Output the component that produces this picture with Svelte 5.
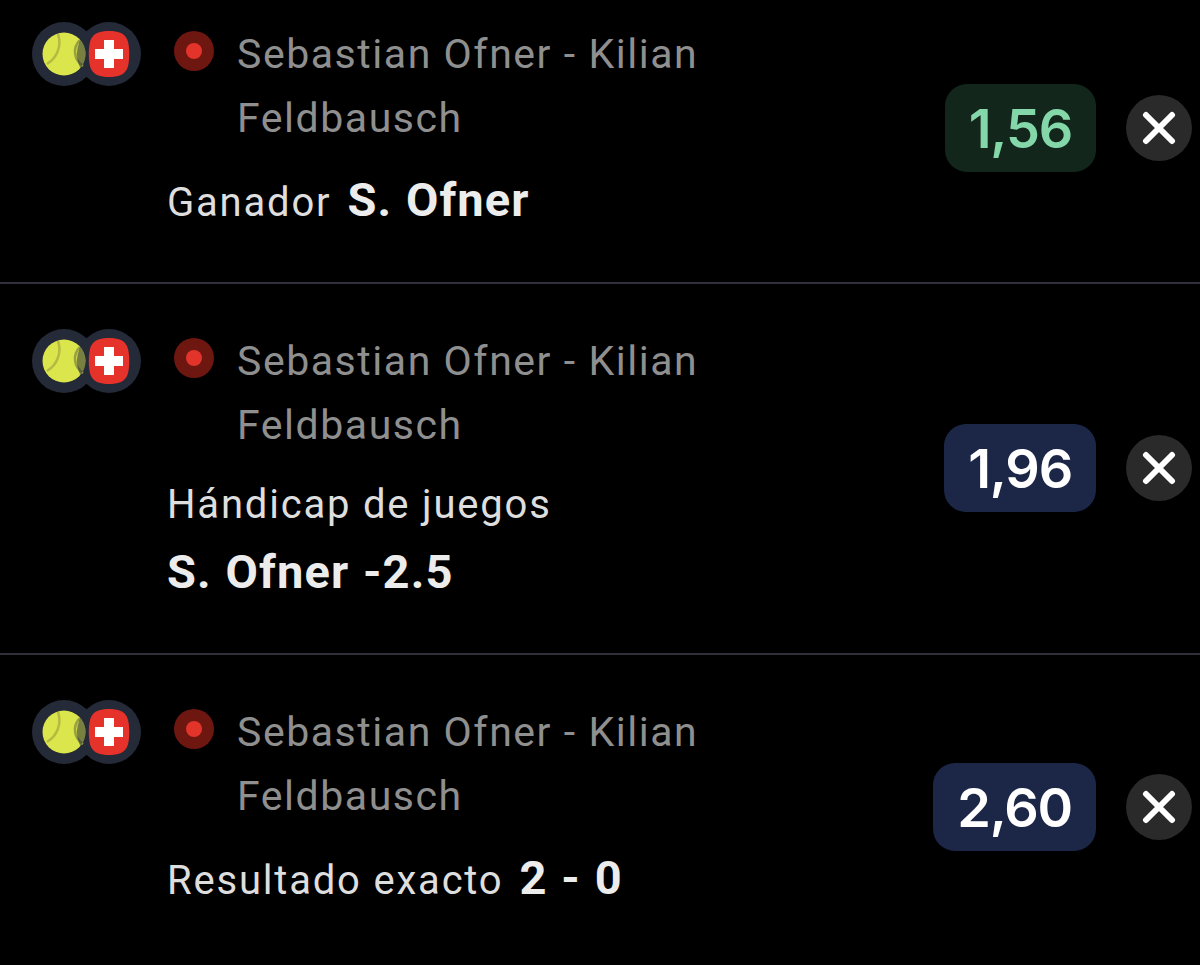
<script>
    const bets = [
        {market: 'Ganador', pick: 'S. Ofner', odds: '1,56', kind: 'won', inline: true},
        {market: 'Hándicap de juegos', pick: 'S. Ofner -2.5', odds: '1,96', kind: 'open', inline: false},
        {market: 'Resultado exacto', pick: '2 - 0', odds: '2,60', kind: 'open', inline: true}
    ]
</script>

<div class="list">
    {#each bets as bet}
        <div class="bet">
            <div class="info">
                <div class="head">
                    <div class="icons">
                        <div class="disc ball">
                            <svg width="44" height="44" viewBox="0 0 44 44">
                                <circle cx="22" cy="22" r="21.5" fill="#dbe64c"/>
                                <path d="M5 32C15 26 20 14 16 2" fill="none" stroke="#b4bb40" stroke-width="2.5"/>
                                <path d="M41 34C32 28 30 16 38 8" fill="none" stroke="#9aa040" stroke-width="2.5"/>
                                <path d="M38.26 7.93A21.5 21.5 0 0 1 38.26 36.07A32 32 0 0 1 38.26 7.93z" fill="rgba(37, 42, 56, .55)"/>
                            </svg>
                        </div>
                        <div class="disc flag">
                            <svg width="42" height="46" viewBox="0 0 42 46">
                                <path d="M21 0C30 0 36 2 39 8C42 14 42 32 39 38C36 44 30 46 21 46C12 46 6 44 3 38C0 32 0 14 3 8C6 2 12 0 21 0z" fill="#e5322b"/>
                                <path d="M16 9h10v9h9v10h-9v9h-10v-9h-9v-10h9z" fill="#fff"/>
                            </svg>
                        </div>
                    </div>
                    <div class="live"><span></span></div>
                    <div class="title">Sebastian Ofner - Kilian Feldbausch</div>
                </div>
                <div class="market" class:stack={!bet.inline}>
                    <span class="label">{bet.market}</span>
                    <span class="pick">{bet.pick}</span>
                </div>
            </div>
            <div class="side">
                <div class="odds {bet.kind}">{bet.odds}</div>
                <div class="close">
                    <svg width="34" height="34" viewBox="0 0 34 34">
                        <path d="M4 4L30 30M30 4L4 30" stroke="#fff" stroke-width="6" stroke-linecap="round"/>
                    </svg>
                </div>
            </div>
        </div>
    {/each}
</div>

<style>
    :global(body){
        margin: 0;
        background: #000;
    }
    .list{
        width: 1200px;
        height: 965px;
        background: #000;
        font-family: Roboto, "Liberation Sans", sans-serif;
        overflow: hidden;
    }
    .bet{
        display: flex;
        align-items: flex-start;
        padding: 45px 8px 0 32px;
        box-sizing: border-box;
        height: 371px;
        border-bottom: 2px solid #30303c;
    }
    .bet:first-child{
        height: 284px;
        padding-top: 22px;
    }
    .bet:last-child{
        height: 310px;
        border-bottom: none;
    }
    .side{
        display: flex;
        align-items: center;
        margin-top: 95px;
    }
    .bet:first-child .side{
        margin-top: 62px;
    }
    .bet:last-child .side{
        margin-top: 63px;
    }
    .info{
        flex: 1;
    }
    .head{
        display: flex;
        align-items: flex-start;
    }
    .icons{
        display: flex;
        width: 142px;
        flex: none;
    }
    .disc{
        width: 64px;
        height: 64px;
        border-radius: 50%;
        background: #252a38;
        display: flex;
        align-items: center;
        justify-content: center;
        flex: none;
    }
    .ball{
        position: relative;
        z-index: 1;
    }
    .flag{
        margin-left: -19px;
    }
    .flag svg{
        position: relative;
        z-index: 2;
    }
    .live{
        width: 40px;
        height: 40px;
        border-radius: 50%;
        background: #6e1610;
        display: flex;
        align-items: center;
        justify-content: center;
        flex: none;
        margin-top: 9px;
    }
    .live span{
        width: 16px;
        height: 16px;
        border-radius: 50%;
        background: #e2342b;
    }
    .title{
        width: 490px;
        margin-left: 23px;
        font-size: 41px;
        line-height: 64px;
        letter-spacing: 1.55px;
        color: #8f8f8f;
    }
    .market{
        display: flex;
        align-items: baseline;
        gap: 16px;
        margin: 25px 0 0 135px;
    }
    .stack{
        flex-direction: column;
        gap: 17px;
        margin-top: 23px;
    }
    .label{
        font-size: 40px;
        line-height: 50px;
        letter-spacing: 1.8px;
        color: #dedede;
    }
    .pick{
        font-size: 47px;
        line-height: 50px;
        font-weight: 700;
        letter-spacing: 1.1px;
        word-spacing: 1px;
        color: #ececec;
    }
    .odds{
        height: 88px;
        padding: 0 24px;
        border-radius: 22px;
        display: flex;
        align-items: center;
        justify-content: center;
        font-family: Inter, Roboto, sans-serif;
        font-size: 54px;
        letter-spacing: -1.2px;
        font-weight: 600;
        flex: none;
    }
    .won{
        background: #13261b;
        color: #84d7a8;
    }
    .open{
        background: #1c2748;
        color: #fff;
    }
    .close{
        width: 66px;
        height: 66px;
        border-radius: 50%;
        background: #2a2a2a;
        margin-left: 30px;
        flex: none;
        display: flex;
        align-items: center;
        justify-content: center;
    }
</style>
